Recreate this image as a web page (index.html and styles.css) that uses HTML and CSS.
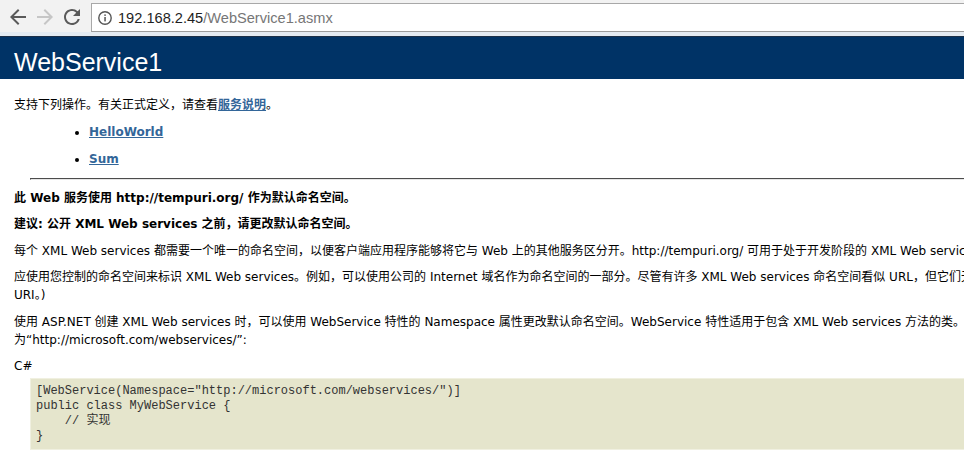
FILE: index.html
```html
<!DOCTYPE html>
<html lang="zh-CN">
<head>
  <meta charset="UTF-8">
  <meta name="viewport" content="width=device-width, initial-scale=1.0">
  <title>WebService1 Web 服务</title>
  <link rel="stylesheet" href="styles.css">
</head>
<body>

  <div class="toolbar">
    <div class="nav-buttons">
      <svg class="nav-icon back" viewBox="4 4 16 16" width="16" height="16"><path d="M20 11H7.83l5.59-5.59L12 4l-8 8 8 8 1.41-1.41L7.83 13H20v-2z"/></svg>
      <svg class="nav-icon forward" viewBox="4 4 16 16" width="16" height="16"><path d="M4 11h12.17l-5.59-5.59L12 4l8 8-8 8-1.41-1.41L16.17 13H4v-2z"/></svg>
      <svg class="nav-icon reload" viewBox="4 4 16 16" width="16" height="16"><path d="M17.65 6.35A7.958 7.958 0 0 0 12 4c-4.42 0-7.990 3.58-7.99 8s3.57 8 7.99 8c3.73 0 6.84-2.55 7.73-6h-2.08A5.99 5.99 0 0 1 12 18c-3.31 0-6-2.690-6-6s2.69-6 6-6c1.66 0 3.14.69 4.22 1.78L13 11h7V4l-2.35 2.35z"/></svg>
    </div>
    <div class="address">
      <svg class="info-icon" viewBox="0 0 14 14" width="14" height="14">
        <circle cx="7" cy="7" r="6.2" fill="none" stroke="#555" stroke-width="1.4"/>
        <rect x="6.3" y="6" width="1.5" height="4.4" fill="#555"/>
        <rect x="6.3" y="3.4" width="1.5" height="1.5" fill="#555"/>
      </svg>
      <span class="host">192.168.2.45</span><span class="path">/WebService1.asmx</span>
    </div>
  </div>
  <div class="toolbar-edge"></div>

  <div class="heading1">WebService1</div>

  <div class="content">
    <p class="intro">支持下列操作。有关正式定义，请查看<a href="#">服务说明</a>。</p>

    <ul>
      <li><a href="#">HelloWorld</a></li>
      <li><a href="#">Sum</a></li>
    </ul>

    <hr>

    <p class="intro"><b>此 Web 服务使用 http://tempuri.org/ 作为默认命名空间。</b></p>
    <p class="intro"><b>建议: 公开 XML Web services 之前，请更改默认命名空间。</b></p>
    <p class="intro">每个 XML Web services 都需要一个唯一的命名空间，以便客户端应用程序能够将它与 Web 上的其他服务区分开。http://tempuri.org/ 可用于处于开发阶段的 XML Web services，而已发布的 XML Web services 应使用更为永久的命名空间。</p>
    <p class="intro">应使用您控制的命名空间来标识 XML Web services。例如，可以使用公司的 Internet 域名作为命名空间的一部分。尽管有许多 XML Web services 命名空间看似 URL，但它们无需指向 Web 上的实际资源。(XML Web services 的命名空间是<br>URI。)</p>
    <p class="intro">使用 ASP.NET 创建 XML Web services 时，可以使用 WebService 特性的 Namespace 属性更改默认命名空间。WebService 特性适用于包含 XML Web services 方法的类。下面的代码示例将命名空间设置<br>为“http://microsoft.com/webservices/”:</p>
    <p class="intro">C#</p>
<pre>[WebService(Namespace="http://microsoft.com/webservices/")]
public class MyWebService {
    // 实现
}</pre>
  </div>

</body>
</html>
```

FILE: styles.css
```css
body {
  margin: 0;
  background-color: white;
  color: #000;
  font-family: 'DejaVu Sans', 'Noto Sans CJK SC', sans-serif;
  overflow: hidden;
}

/* browser chrome */
.toolbar {
  height: 32px;
  background: #f2f2f2;
  display: flex;
  align-items: flex-start;
}
.nav-buttons {
  display: flex;
  gap: 11px;
  padding: 9px 0 0 10px;
  width: 81px;
}
.nav-icon {
  fill: #5a5a5a;
}
.nav-icon.forward {
  fill: #c6c6c6;
}
.address {
  flex: 1;
  height: 27px;
  margin-top: 3px;
  margin-right: -10px;
  background: #fff;
  border: 1px solid #a8a8a8;
  border-bottom-color: #9c9c9c;
  display: flex;
  align-items: center;
  padding-left: 6px;
  font-family: 'Liberation Sans', sans-serif;
  font-size: 14.6px;
}
.info-icon {
  margin-right: 6px;
}
.host {
  color: #1e1e1e;
}
.path {
  color: #767676;
}
.toolbar-edge {
  height: 4px;
  background: #e4ebf2;
  border-bottom: 1px solid #1b2f47;
}

/* page */
.heading1 {
  background-color: #003366;
  color: #fff;
  font-family: 'Liberation Sans', sans-serif;
  font-size: 25px;
  line-height: 28px;
  padding: 11px 0 3px 14px;
}
.content {
  width: 1240px;
  padding: 17px 0 0 30px;
  font-size: 12px;
  line-height: 18px;
}
p {
  margin: 0 0 8.5px;
  white-space: nowrap;
}
.intro {
  margin-left: -16px;
}
a {
  color: #336699;
  font-weight: bold;
  text-decoration: underline;
}
ul {
  margin: 0 0 10px;
  padding-left: 59px;
}
li + li {
  margin-top: 9px;
}
hr {
  margin: 0 0 9px;
  border: 1px inset #a0a0a0;
  border-bottom-color: #e6e6e6;
  border-right-color: #e6e6e6;
}
pre {
  background-color: #e5e5cc;
  border: 1px solid #f0f0e0;
  padding: 5px;
  margin: -6px 0 0;
  font-family: 'Liberation Mono', 'Noto Sans CJK SC', monospace;
  font-size: 12px;
  line-height: 15px;
  color: #333;
}
```
